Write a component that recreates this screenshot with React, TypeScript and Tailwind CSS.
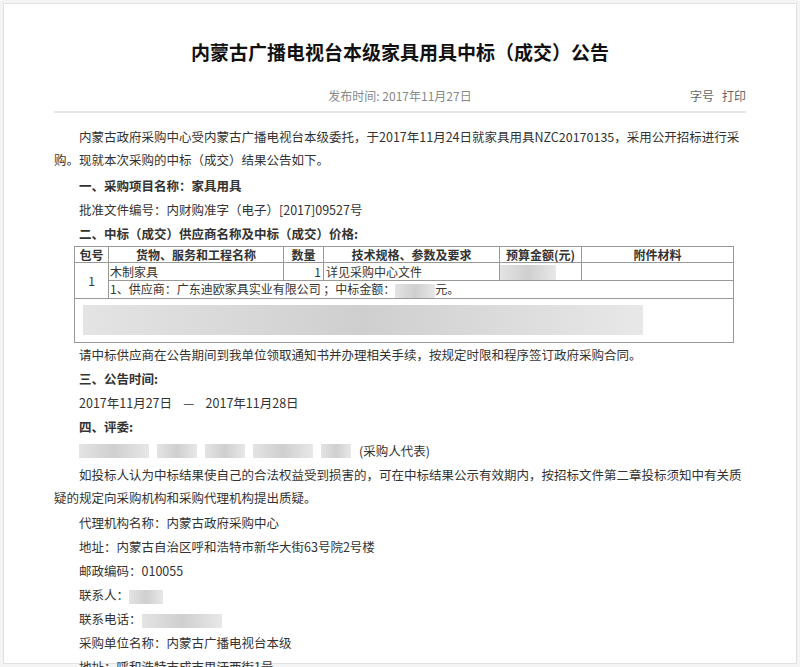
const F = { fontFamily: '"Noto Sans CJK SC", "Noto Sans", sans-serif' };

function Blur({ w, h = 14, className = "" }: { w: number; h?: number; className?: string }) {
  return (
    <span
      className={"inline-block align-middle bg-gradient-to-r from-[#e4e4e4] via-[#cfcfcf] to-[#e8e8e8] " + className}
      style={{ width: w, height: h }}
    />
  );
}

export default function App() {
  return (
    <div className="w-[800px] h-[667px] bg-[#f4f4f4] p-[3px] overflow-hidden" style={F}>
      <div className="bg-white border border-[#e2e2e2] h-full px-[50px] text-[#333]">
        <h1 className="pt-[34px] text-center text-[19px] font-bold text-[#111] leading-[28px]">
          内蒙古广播电视台本级家具用具中标（成交）公告
        </h1>
        <div className="relative mt-[20px] h-[20px] text-[12px] text-[#888] text-center leading-[20px]">
          发布时间: 2017年11月27日
          <span className="absolute right-0 top-0 text-[#666]">字号&nbsp;&nbsp;&nbsp;打印</span>
        </div>
        <div className="mt-[5px] border-t-2 border-[#e6e6e6]" />
        <div className="text-[12.5px] leading-[24px] pt-[12px]">
          <p className="indent-[25px] leading-[23px]">
            内蒙古政府采购中心受内蒙古广播电视台本级委托，于2017年11月24日就家具用具NZC20170135，采用公开招标进行采购。现就本次采购的中标（成交）结果公告如下。
          </p>
          <p className="pl-[25px] mt-[3px] font-bold">一、采购项目名称：家具用具</p>
          <p className="pl-[25px]">批准文件编号：内财购准字（电子）[2017]09527号</p>
          <p className="pl-[25px] font-bold">二、中标（成交）供应商名称及中标（成交）价格:</p>
          <table className="ml-[20px] w-[660px] border-collapse text-[12px] leading-[15px]">
            <tbody>
              <tr className="font-bold text-center">
                <td className="border border-[#999] w-[34px]">包号</td>
                <td className="border border-[#999] w-[175px]">货物、服务和工程名称</td>
                <td className="border border-[#999] w-[40px]">数量</td>
                <td className="border border-[#999] w-[176px]">技术规格、参数及要求</td>
                <td className="border border-[#999] w-[82px] whitespace-nowrap">预算金额(元)</td>
                <td className="border border-[#999]">附件材料</td>
              </tr>
              <tr>
                <td rowSpan={2} className="border border-[#999] text-center">1</td>
                <td className="border border-[#999] px-[1px]">木制家具</td>
                <td className="border border-[#999] text-right px-[2px]">1</td>
                <td className="border border-[#999] px-[2px]">详见采购中心文件</td>
                <td className="border border-[#999]"><Blur w={56} h={15} /></td>
                <td className="border border-[#999]"></td>
              </tr>
              <tr>
                <td colSpan={5} className="border border-[#999] px-[1px]">
                  1、供应商：广东迪欧家具实业有限公司 ；中标金额：<Blur w={40} />元。
                </td>
              </tr>
              <tr>
                <td colSpan={6} className="border border-[#999] h-[44px] px-[8px]">
                  <Blur w={560} h={30} />
                </td>
              </tr>
            </tbody>
          </table>
          <p className="pl-[25px]">请中标供应商在公告期间到我单位领取通知书并办理相关手续，按规定时限和程序签订政府采购合同。</p>
          <p className="pl-[25px] font-bold">三、公告时间:</p>
          <p className="pl-[25px]">2017年11月27日&nbsp;&nbsp;&nbsp;&nbsp;—&nbsp;&nbsp;&nbsp;&nbsp;2017年11月28日</p>
          <p className="pl-[25px] font-bold">四、评委:</p>
          <p className="pl-[25px] flex items-center gap-[8px]">
            <Blur w={70} /><Blur w={40} /><Blur w={40} /><Blur w={60} /><Blur w={30} />
            <span>(采购人代表)</span>
          </p>
          <p className="indent-[25px] leading-[23px]">
            如投标人认为中标结果使自己的合法权益受到损害的，可在中标结果公示有效期内，按招标文件第二章投标须知中有关质疑的规定向采购机构和采购代理机构提出质疑。
          </p>
          <p className="pl-[25px] mt-[2px]">代理机构名称：内蒙古政府采购中心</p>
          <p className="pl-[25px]">地址：内蒙古自治区呼和浩特市新华大街63号院2号楼</p>
          <p className="pl-[25px]">邮政编码：010055</p>
          <p className="pl-[25px]">联系人：<Blur w={34} /></p>
          <p className="pl-[25px]">联系电话：<Blur w={80} /></p>
          <p className="pl-[25px]">采购单位名称：内蒙古广播电视台本级</p>
          <p className="pl-[25px]">地址：呼和浩特市成吉思汗西街1号</p>
        </div>
      </div>
    </div>
  );
}
